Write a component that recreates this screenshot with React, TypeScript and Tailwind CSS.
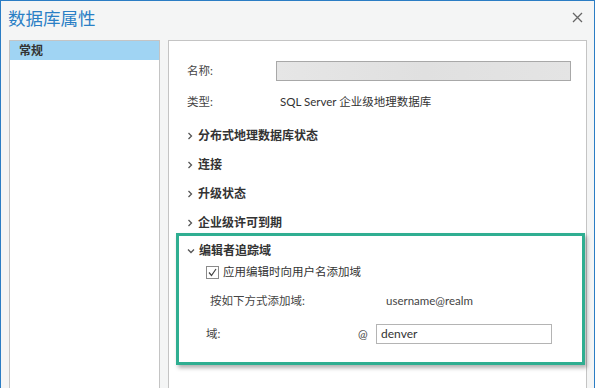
import React from "react";

const font = { fontFamily: 'Lato, "Noto Sans CJK SC", "Noto Sans", sans-serif' };

const Chevron = ({ open }: { open?: boolean }) => (
  <svg width="8" height="8" viewBox="0 0 8 8" className="shrink-0">
    {open ? (
      <path d="M1 2.5 L4 5.5 L7 2.5" fill="none" stroke="#555" strokeWidth="1.3" />
    ) : (
      <path d="M2.5 1 L5.5 4 L2.5 7" fill="none" stroke="#555" strokeWidth="1.3" />
    )}
  </svg>
);

const Section = ({ title }: { title: string }) => (
  <div className="h-[29px] flex items-center gap-[4px] pl-[17px]">
    <Chevron />
    <span className="text-[12px] font-bold text-[#333]">{title}</span>
  </div>
);

export default function App() {
  return (
    <div
      className="w-[595px] h-[388px] bg-[#f4f5f5] border-t border-x border-[#2b7dc4] overflow-hidden flex flex-col"
      style={font}
    >
      <div className="h-[39px] shrink-0 flex items-center justify-between pl-[7px] pr-[11px]">
        <span className="text-[17.5px] text-[#2a7fc5] leading-none pb-[4px]">数据库属性</span>
        <svg width="11" height="11" viewBox="0 0 11 11" className="mb-[6px]">
          <path d="M1 1 L10 10 M10 1 L1 10" stroke="#666" strokeWidth="1.3" />
        </svg>
      </div>

      <div className="flex flex-1 pl-[8px] pr-[7px] gap-[8px]">
        <div className="w-[151px] bg-white border border-b-0 border-[#c4c4c4]">
          <div className="h-[19px] bg-[#a0d4f3] flex items-center pl-[9px] text-[12px] font-semibold text-[#333]">
            常规
          </div>
        </div>

        <div className="flex-1 bg-white border border-b-0 border-[#c4c4c4] pt-[20px]">
          <div className="flex items-center h-[20px] text-[11.5px] text-[#444]">
            <span className="w-[107px] pl-[18px]">名称:</span>
            <div className="w-[295px] h-[20px] border border-[#a8a8a8] bg-gradient-to-r from-[#e6e6e6] via-[#e0e0e0] to-[#e4e4e4]" />
          </div>
          <div className="flex items-center h-[20px] mt-[11px] text-[11.5px] text-[#444]">
            <span className="w-[111px] pl-[18px]">类型:</span>
            <span className="text-[#333]">SQL Server 企业级地理数据库</span>
          </div>

          <div className="mt-[9px]">
            <Section title="分布式地理数据库状态" />
            <Section title="连接" />
            <Section title="升级状态" />
            <Section title="企业级许可到期" />
          </div>

          <div className="ml-[7px] mr-[1px] mt-[-4px] h-[132px] border-[3px] border-[#2fae91] shadow-[2px_3px_4px_rgba(0,0,0,0.3)]">
            <div className="h-[29px] flex items-center gap-[4px] pl-[8px]">
              <Chevron open />
              <span className="text-[12px] font-bold text-[#333]">编辑者追踪域</span>
            </div>
            <div className="flex items-center gap-[4px] pl-[27px] h-[14px]">
              <div className="w-[13px] h-[13px] border border-[#8a8a8a] flex items-center justify-center">
                <svg width="11" height="11" viewBox="0 0 11 11">
                  <path d="M2 5.5 L4.5 8.5 L9 2" fill="none" stroke="#444" strokeWidth="1.2" />
                </svg>
              </div>
              <span className="text-[11.5px] text-[#333]">应用编辑时向用户名添加域</span>
            </div>
            <div className="flex items-center h-[20px] mt-[12px] text-[11.5px] text-[#444]">
              <span className="w-[207px] pl-[31px]">按如下方式添加域:</span>
              <span className="text-[#444]">username@realm</span>
            </div>
            <div className="flex items-center h-[20px] mt-[13px] text-[11.5px] text-[#444]">
              <span className="w-[179px] pl-[27px]">域:</span>
              <span className="w-[18px]">@</span>
              <div className="w-[176px] h-[20px] border border-[#b4b4b4] flex items-center pl-[4px] text-[12px] text-[#333]">
                denver
              </div>
            </div>
          </div>
        </div>
      </div>
    </div>
  );
}
